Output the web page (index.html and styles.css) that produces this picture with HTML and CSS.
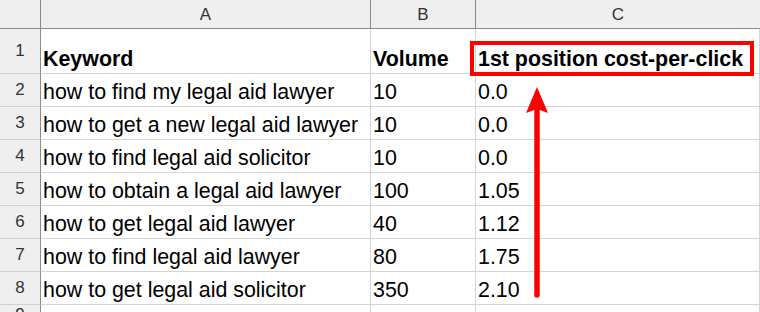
FILE: index.html
```html
<!DOCTYPE html>
<html>
<head>
<meta charset="utf-8">
<link rel="stylesheet" href="styles.css">
</head>
<body>
<div class="sheet">
  <div class="grid">
    <div class="corner"></div>
    <div class="colhead">A</div>
    <div class="colhead">B</div>
    <div class="colhead last">C</div>

    <div class="rowhead">1</div>
    <div class="cell bold">Keyword</div>
    <div class="cell bold">Volume</div>
    <div class="cell bold">1st position cost-per-click</div>

    <div class="rowhead">2</div>
    <div class="cell">how to find my legal aid lawyer</div>
    <div class="cell">10</div>
    <div class="cell">0.0</div>

    <div class="rowhead">3</div>
    <div class="cell">how to get a new legal aid lawyer</div>
    <div class="cell">10</div>
    <div class="cell">0.0</div>

    <div class="rowhead">4</div>
    <div class="cell">how to find legal aid solicitor</div>
    <div class="cell">10</div>
    <div class="cell">0.0</div>

    <div class="rowhead">5</div>
    <div class="cell">how to obtain a legal aid lawyer</div>
    <div class="cell">100</div>
    <div class="cell">1.05</div>

    <div class="rowhead">6</div>
    <div class="cell">how to get legal aid lawyer</div>
    <div class="cell">40</div>
    <div class="cell">1.12</div>

    <div class="rowhead">7</div>
    <div class="cell">how to find legal aid lawyer</div>
    <div class="cell">80</div>
    <div class="cell">1.75</div>

    <div class="rowhead">8</div>
    <div class="cell">how to get legal aid solicitor</div>
    <div class="cell">350</div>
    <div class="cell">2.10</div>

    <div class="rowhead">9</div>
    <div class="cell"></div>
    <div class="cell"></div>
    <div class="cell"></div>
  </div>

  <div class="highlight"></div>
  <svg class="arrow" width="30" height="220" viewBox="0 0 30 220">
    <line x1="15" y1="20" x2="15" y2="208" stroke="#ff0000" stroke-width="5.5" stroke-linecap="round"/>
    <path d="M15 0 L26 26 L15 22 L4 26 Z" fill="#ff0000"/>
  </svg>
</div>
</body>
</html>
```

FILE: styles.css
```css
html, body {
  margin: 0;
  padding: 0;
  background: #ffffff;
}

.sheet {
  position: relative;
  width: 760px;
  height: 312px;
  overflow: hidden;
  font-family: "Liberation Sans", Arial, sans-serif;
}

.grid {
  display: grid;
  grid-template-columns: 41px 330px 105px 1fr;
  grid-template-rows: 29px 45px repeat(7, 33px) 20px;
  height: 330px;
}

.grid > div {
  box-sizing: border-box;
}

.corner {
  background: #efefef;
  border-right: 1px solid #8a8a8a;
  border-bottom: 1px solid #8a8a8a;
}

.colhead {
  background: #efefef;
  border-right: 1px solid #8a8a8a;
  border-bottom: 1px solid #8a8a8a;
  color: #333333;
  font-size: 17px;
  display: flex;
  align-items: center;
  justify-content: center;
  padding-top: 2px;
}

.colhead.last {
  border-right: none;
}

.rowhead {
  background: #efefef;
  border-right: 1px solid #8a8a8a;
  border-bottom: 1px solid #d0d0d0;
  color: #333333;
  font-size: 17px;
  display: flex;
  align-items: center;
  justify-content: center;
}

.cell {
  border-right: 1px solid #d4d4d4;
  border-bottom: 1px solid #d4d4d4;
  font-size: 21.4px;
  line-height: 24px;
  color: #000000;
  display: flex;
  align-items: flex-end;
  padding: 0 0 2px 2px;
  white-space: nowrap;
}

.bold {
  font-weight: bold;
}

.highlight {
  position: absolute;
  left: 470px;
  top: 41px;
  width: 284px;
  height: 35px;
  box-sizing: border-box;
  border: 4px solid #ff0000;
}

.arrow {
  position: absolute;
  left: 522px;
  top: 87px;
}
```
